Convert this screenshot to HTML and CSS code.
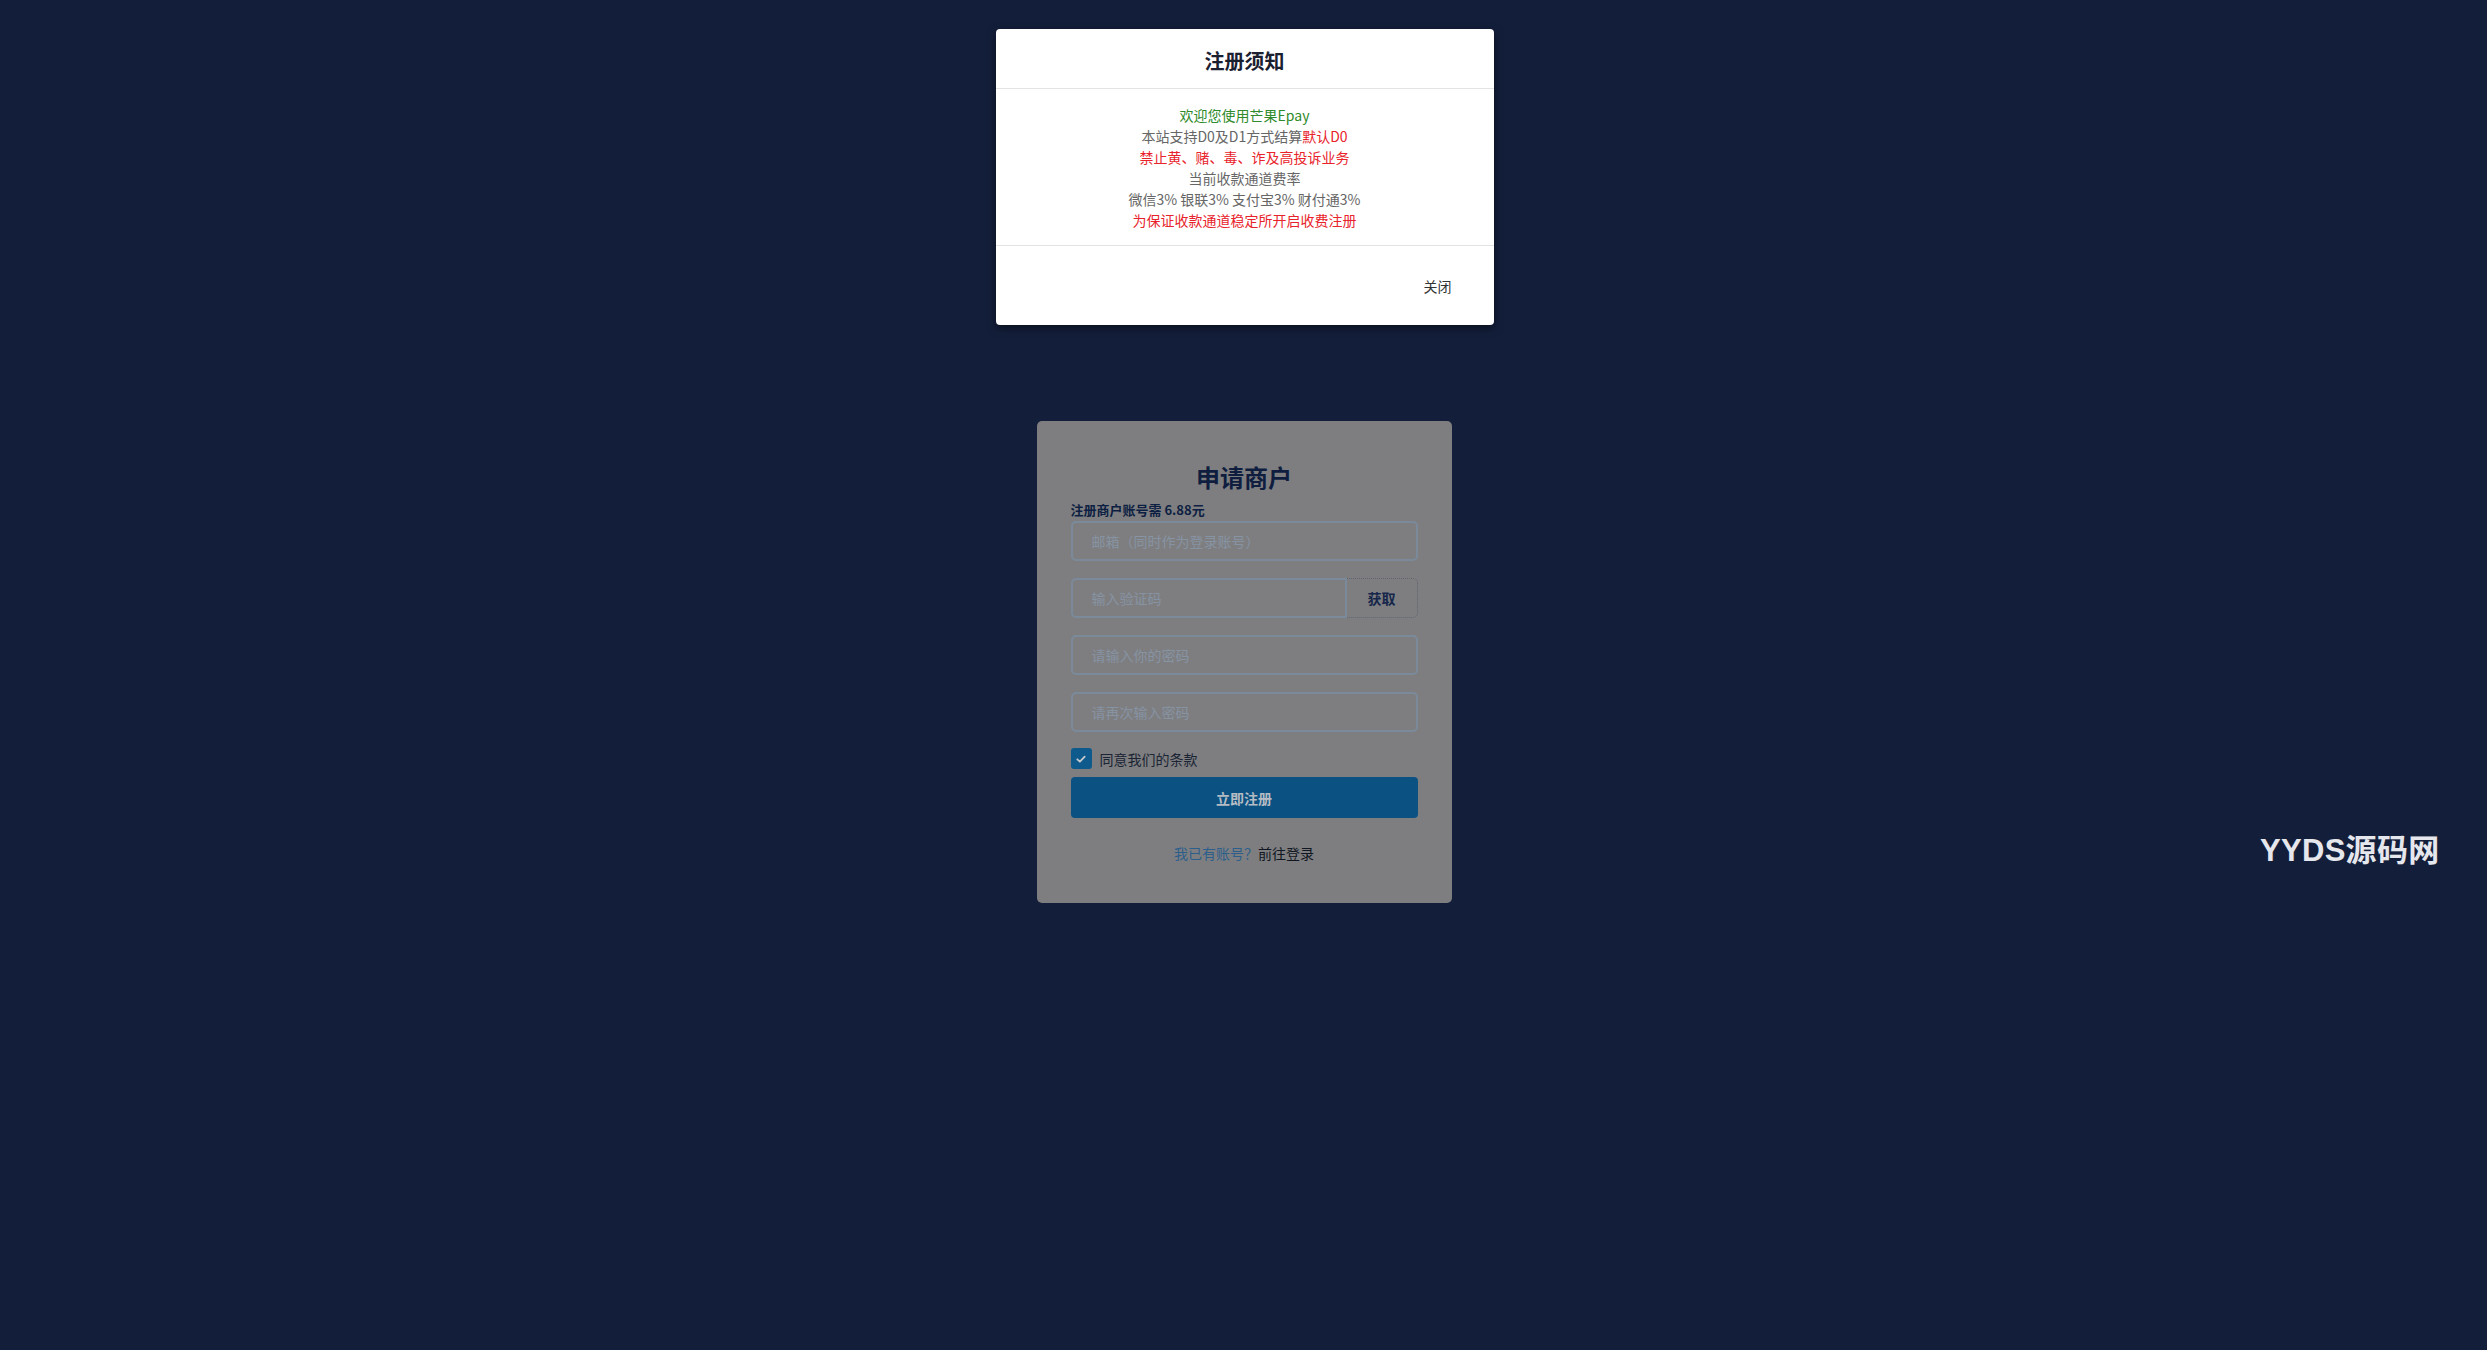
FILE: index.html
```html
<!DOCTYPE html>
<html lang="zh-CN">
<head>
<meta charset="utf-8">
<title>申请商户</title>
<link rel="stylesheet" href="styles.css">
</head>
<body>
<main class="page">
  <section class="card">
    <h1 class="card-title">申请商户</h1>
    <p class="fee">注册商户账号需 6.88元</p>
    <div class="field"><span class="ph">邮箱（同时作为登录账号）</span></div>
    <div class="field-group">
      <div class="field grow"><span class="ph">输入验证码</span></div>
      <div class="get-btn">获取</div>
    </div>
    <div class="field"><span class="ph">请输入你的密码</span></div>
    <div class="field"><span class="ph">请再次输入密码</span></div>
    <label class="agree">
      <span class="check"><svg viewBox="0 0 12 12" width="12" height="12"><path d="M2.3 6.3 L4.9 8.7 L9.7 3.6" fill="none" stroke="#c4c8cc" stroke-width="1.8" stroke-linecap="round" stroke-linejoin="round"/></svg></span>
      <span class="agree-text">同意我们的条款</span>
    </label>
    <div class="submit">立即注册</div>
    <p class="login-link"><span class="blue">我已有账号？</span><span class="dark">前往登录</span></p>
  </section>
</main>
<div class="watermark">YYDS源码网</div>
<div class="modal">
  <div class="modal-header">注册须知</div>
  <div class="modal-body">
    <p class="green">欢迎您使用芒果Epay</p>
    <p class="gray">本站支持D0及D1方式结算<span class="red">默认D0</span></p>
    <p class="red">禁止黄、赌、毒、诈及高投诉业务</p>
    <p class="gray">当前收款通道费率</p>
    <p class="gray">微信3% 银联3% 支付宝3% 财付通3%</p>
    <p class="red">为保证收款通道稳定所开启收费注册</p>
  </div>
  <div class="modal-footer"><span class="close-btn">关闭</span></div>
</div>
</body>
</html>
```

FILE: styles.css
```css
* { box-sizing: border-box; }
html, body { margin: 0; padding: 0; }
body {
  background: #131e3a;
  font-family: "Noto Sans CJK SC", "Liberation Sans", sans-serif;
  font-size: 14px;
  min-height: 1350px;
}
.page {
  display: flex;
  justify-content: center;
  padding-top: 421px;
  padding-left: 1px;
}
.card {
  width: 415px;
  background: #7e7e80;
  border-radius: 5px;
  padding: 40px 34px 40px;
  display: flex;
  flex-direction: column;
}
.card-title {
  margin: 0 0 7px;
  text-align: center;
  font-size: 24px;
  line-height: 32px;
  font-weight: 700;
  color: #0f1d3f;
}
.fee {
  margin: 0 0 1px;
  font-size: 13px;
  line-height: 20px;
  font-weight: 700;
  color: #0d1f42;
}
.field {
  height: 40px;
  border: 2px solid #7b8a9b;
  border-radius: 5px;
  display: flex;
  align-items: center;
  padding-left: 19px;
  margin-bottom: 17px;
}
.ph { color: #8693a3; font-size: 14px; }
.field-group { display: flex; margin-bottom: 17px; }
.field-group .field { margin-bottom: 0; border-radius: 5px 0 0 5px; flex: 1; }
.get-btn {
  width: 71px;
  height: 40px;
  border: 1px dotted #5f6670;
  border-left: none;
  border-radius: 0 5px 5px 0;
  display: flex;
  align-items: center;
  justify-content: center;
  font-weight: 700;
  font-size: 14px;
  color: #15264a;
}
.agree {
  display: flex;
  align-items: center;
  gap: 8px;
  margin-top: -1px;
  height: 21px;
}
.check {
  width: 21px;
  height: 21px;
  border-radius: 3px;
  background: #0e5a8c;
  display: flex;
  align-items: center;
  justify-content: center;
}
.agree-text { color: #1a2434; font-size: 14px; }
.submit {
  margin-top: 8px;
  height: 41px;
  background: #0b5182;
  border-radius: 4px;
  display: flex;
  align-items: center;
  justify-content: center;
  color: #b5bcc4;
  font-size: 14px;
  font-weight: 700;
}
.login-link {
  margin: 25px 0 0;
  text-align: center;
  line-height: 20px;
  font-size: 14px;
}
.blue { color: #2c5e8c; }
.dark { color: #101722; }
.watermark {
  position: absolute;
  left: 2260px;
  top: 833px;
  font-family: "Liberation Sans", "Noto Sans CJK SC", sans-serif;
  font-weight: 700;
  font-size: 31px;
  line-height: 36px;
  color: #e6e7ec;
  letter-spacing: 0.3px;
}
.modal {
  position: absolute;
  top: 29px;
  left: 50%;
  width: 498px;
  margin-left: -248px;
  background: #fff;
  border-radius: 4px;
  box-shadow: 0 3px 9px rgba(0,0,0,0.5);
}
.modal-header {
  padding: 18px 15px 13px;
  line-height: 28px;
  text-align: center;
  font-size: 20px;
  font-weight: 700;
  color: #1a2030;
  border-bottom: 1px solid #e3e3e3;
}
.modal-body {
  padding: 16px 15px 14px;
  text-align: center;
  border-bottom: 1px solid #e3e3e3;
}
.modal-body p { margin: 0; line-height: 21px; font-size: 14px; }
.green { color: #2e8a2a; }
.gray { color: #666; }
.red { color: #e8232b; }
.modal-footer {
  padding: 23px 30px 22px;
  display: flex;
  justify-content: flex-end;
}
.close-btn {
  line-height: 34px;
  padding: 0 12px;
  font-size: 14px;
  color: #333;
}
```
